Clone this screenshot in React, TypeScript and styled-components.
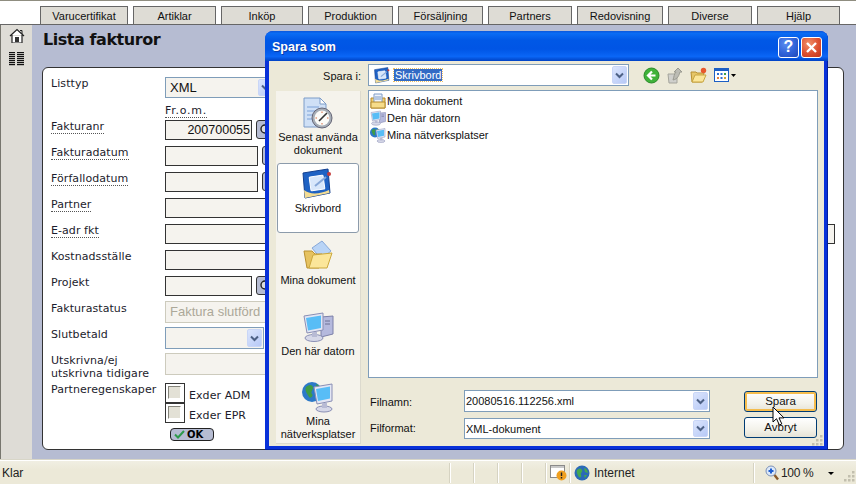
import React from "react";
import styled, { createGlobalStyle } from "styled-components";

const Global = createGlobalStyle`
  html, body { margin: 0; padding: 0; background: #fff; }
  * { box-sizing: border-box; }
`;

const UI = `"Liberation Sans", Arial, sans-serif`;
const WEB = `"DejaVu Sans", Verdana, sans-serif`;

const Page = styled.div`
  position: relative;
  width: 856px;
  height: 484px;
  overflow: hidden;
  display: flex;
  flex-direction: column;
  font-family: ${UI};
  color: #000;
`;
const TopBar = styled.div`
  height: 25px;
  flex: none;
  border-top: 1px solid #8f8d80;
  border-bottom: 1px solid #666;
  padding: 5px 0 0 40px;
  display: flex;
  gap: 5px;
  background: #fff;
`;
const Tab = styled.div<{ $w: number }>`
  width: ${(p) => p.$w}px;
  height: 18px;
  background: #dedcd5;
  border: 1px solid #666;
  border-bottom: none;
  font-size: 11px;
  line-height: 18px;
  text-align: center;
  color: #111;
`;
const Content = styled.div`
  flex: 1;
  display: flex;
  min-height: 0;
`;
const Sidebar = styled.div`
  width: 32px;
  flex: none;
  background: #dedcd6;
  border-left: 1px solid #77766e;
  display: flex;
  flex-direction: column;
  align-items: center;
  gap: 8px;
  padding: 3px 0 0 0;
`;
const Main = styled.div`
  flex: 1;
  background: #b6bcd2;
  padding: 0 12px 9px 10px;
  display: flex;
  flex-direction: column;
  min-width: 0;
`;
const Heading = styled.div`
  height: 42px;
  flex: none;
  font-family: ${WEB};
  font-weight: bold;
  font-size: 16px;
  letter-spacing: -0.45px;
  line-height: 29px;
  padding-left: 1px;
  color: #111;
`;
const Card = styled.div`
  flex: 1;
  background: #fff;
  border: 1px solid #333;
  border-radius: 6px;
  padding: 9px 8px 0;
  font-family: ${WEB};
  font-size: 11px;
  letter-spacing: 0.07px;
  color: #1c1c2c;
`;
const Row = styled.div<{ $h: number }>`
  height: ${(p) => p.$h}px;
  display: grid;
  grid-template-columns: 114px 1fr;
`;
const Label = styled.div<{ $dy?: number }>`
  line-height: 13px;
  padding-top: ${(p) => p.$dy ?? 0}px;
`;
const HelpLabel = styled.span`
  display: inline-block;
  line-height: 12px;
  border-bottom: 1px dotted #555;
`;
const FromLabel = styled(HelpLabel)`
  margin-top: 7px;
  letter-spacing: 0.75px;
`;
const Controls = styled.div`
  display: flex;
  gap: 4px;
  align-items: flex-start;
`;
const Input = styled.div<{ $w: number; $h?: number }>`
  width: ${(p) => p.$w}px;
  height: ${(p) => p.$h ?? 20}px;
  background: #f5f3ee;
  border: 1px solid #333;
  font-family: ${UI};
  font-size: 12.5px;
  letter-spacing: 0;
  line-height: 18px;
  text-align: right;
  padding-right: 1px;
  color: #111;
`;
const Disabled = styled.div<{ $w: number }>`
  width: ${(p) => p.$w}px;
  height: 22px;
  background: #f5f3ee;
  border: 1px solid #cdcbbd;
  font-family: ${UI};
  font-size: 13px;
  letter-spacing: 0;
  line-height: 20px;
  padding-left: 4px;
  color: #aca899;
`;
const WebSelect = styled.div<{ $w: number; $h: number }>`
  width: ${(p) => p.$w}px;
  height: ${(p) => p.$h}px;
  background: #f5f3ee;
  border: 1px solid #7f9db9;
  font-family: ${UI};
  font-size: 13px;
  letter-spacing: 0;
  line-height: ${(p) => p.$h - 2}px;
  padding: 0 1px 0 4px;
  display: flex;
  align-items: stretch;
  justify-content: space-between;
  color: #111;
`;
const Arrow = styled.div`
  width: 15px;
  margin: 1px 0;
  background: linear-gradient(135deg, #dbe5fd, #b7c9f6);
  border: 1px solid #c9d6f7;
  border-radius: 2px;
  display: flex;
  align-items: center;
  justify-content: center;
`;
const PickButton = styled.div`
  width: 22px;
  height: 19px;
  flex: none;
  background: #b6bcd2;
  border: 1px solid #333;
  border-radius: 3px;
  display: flex;
  align-items: center;
  padding-left: 2px;
`;
const Checks = styled.div`
  display: flex;
  flex-direction: column;
`;
const CheckRow = styled.div`
  height: 20px;
  display: flex;
  align-items: center;
  gap: 4px;
`;
const CheckText = styled.span`
  padding-top: 4px;
`;
const CheckFrame = styled.div`
  width: 20px;
  height: 20px;
  border: 1px solid #333;
  padding: 2px;
`;
const CheckBox = styled.div`
  width: 13px;
  height: 13px;
  background: #e3e1d6;
  border-top: 1px solid #85847b;
  border-left: 1px solid #85847b;
  border-right: 1px solid #fff;
  border-bottom: 1px solid #fff;
`;
const OkButton = styled.div`
  width: 44px;
  height: 13px;
  margin: 5px 0 0 119px;
  background: #b6bcd2;
  border: 1px solid #222;
  border-radius: 4px;
  display: flex;
  align-items: center;
  gap: 2px;
  padding-left: 3px;
  font-weight: bold;
  font-size: 10px;
  color: #000;
`;

const StatusBar = styled.div`
  height: 25px;
  flex: none;
  border-top: 1px solid #d8d6c8;
  box-shadow: inset 0 1px 0 #fff;
  background: linear-gradient(#f1efe4, #ece9d8 40%, #ece9d8);
  display: flex;
  align-items: stretch;
  font-size: 12px;
  padding-top: 2px;
`;
const Cell = styled.div<{ $w?: number }>`
  ${(p) => (p.$w ? `width: ${p.$w}px; flex: none;` : "flex: 1;")}
  border-left: 1px solid #d6d3c2;
  box-shadow: inset 1px 0 0 #fff;
  margin: 1px 0;
  display: flex;
  align-items: center;
  gap: 4px;
  padding-left: 4px;
  color: #222;
  min-width: 0;
`;
const ReadyCell = styled(Cell)`
  border-left: none;
  box-shadow: none;
  padding-left: 2px;
`;
const ZoomCell = styled(Cell)`
  padding-left: 11px;
  gap: 2px;
`;
const ZoomValue = styled.span`
  letter-spacing: -0.35px;
`;
const ZoomCaret = styled.div`
  width: 0;
  height: 0;
  margin-left: 13px;
  border-left: 3px solid transparent;
  border-right: 3px solid transparent;
  border-top: 3px solid #000;
`;
const StatusGrip = styled.div`
  margin-left: auto;
  align-self: flex-end;
  line-height: 0;
`;

const Dialog = styled.div`
  position: absolute;
  left: 265px;
  top: 31px;
  width: 563px;
  height: 419px;
  background: #0831d9;
  border-radius: 8px 8px 0 0;
  padding: 0 4px 4px;
  display: flex;
  flex-direction: column;
  font-size: 11px;
  box-shadow: inset -1px -1px 0 #001ea0;
`;
const TitleBar = styled.div`
  height: 30px;
  flex: none;
  margin: 0 -4px;
  padding: 2px 6px 0 7px;
  border-radius: 8px 8px 0 0;
  background: linear-gradient(#0a57dc 0%, #0a6cf4 8%, #0058e6 30%, #0055e5 60%, #0a66f6 85%, #0042c4 100%);
  display: flex;
  align-items: center;
  justify-content: space-between;
`;
const TitleText = styled.div`
  color: #fff;
  font-family: "Liberation Sans", Arial, sans-serif;
  font-weight: bold;
  font-size: 12.5px;
  text-shadow: 1px 1px 0 #0a3ca8;
`;
const TitleButtons = styled.div`
  display: flex;
  gap: 2px;
`;
const TitleButton = styled.div<{ $close?: boolean }>`
  width: 21px;
  height: 21px;
  border: 1px solid #fff;
  border-radius: 3px;
  background: ${(p) =>
    p.$close
      ? "radial-gradient(circle at 35% 30%, #f0906a, #dd5030 55%, #c0351a)"
      : "radial-gradient(circle at 35% 30%, #5a8cf0, #2f62d8 55%, #1f48b8)"};
  display: flex;
  align-items: center;
  justify-content: center;
`;
const HelpMark = styled.span`
  color: #fff;
  font-weight: bold;
  font-size: 16px;
  line-height: 1;
`;
const DialogBody = styled.div`
  flex: 1;
  background: #ece9d8;
  padding: 3px 6px 3px 7px;
  display: grid;
  grid-template-columns: 85px 1fr;
  grid-template-rows: 23px 1fr;
  column-gap: 7px;
  row-gap: 3px;
  min-height: 0;
`;
const SaveInLabel = styled.div`
  text-align: right;
  line-height: 24px;
  color: #111;
`;
const TopRow = styled.div`
  display: flex;
  align-items: flex-start;
`;
const Combo = styled.div<{ $w: number; $h: number; $pl?: number }>`
  width: ${(p) => p.$w}px;
  height: ${(p) => p.$h}px;
  flex: none;
  background: #fff;
  border: 1px solid #7f9db9;
  display: flex;
  align-items: center;
  padding: 1px 1px 1px ${(p) => p.$pl ?? 1}px;
  gap: 3px;
  color: #111;
`;
const ComboText = styled.span`
  flex: 1;
`;
const Selected = styled.span`
  background: #316ac5;
  color: #fff;
  outline: 1px dotted #f0c060;
  padding: 0 1px;
  line-height: 13px;
`;
const ComboArrow = styled(Arrow)`
  width: 15px;
  align-self: stretch;
  margin: 0;
`;
const ToolIcons = styled.div`
  display: flex;
  align-items: center;
  height: 22px;
  margin-left: 14px;
  gap: 7px;
`;
const Places = styled.div`
  margin-top: 1px;
  background: #f5f3ec;
  border-right: 1px solid #dcdace;
  border-bottom: 1px solid #dcdace;
  display: flex;
  flex-direction: column;
  padding: 2px 1px 0;
`;
const Place = styled.div<{ $active?: boolean; $top: number }>`
  height: 70px;
  flex: none;
  display: flex;
  flex-direction: column;
  align-items: center;
  text-align: center;
  padding-top: ${(p) => p.$top}px;
  line-height: 13px;
  background: ${(p) => (p.$active ? "#fff" : "transparent")};
  border: ${(p) => (p.$active ? "1px solid #8c9bab" : "none")};
  border-radius: 3px;
  color: #111;
`;
const PlaceIcon = styled.div`
  height: 32px;
  flex: none;
  display: flex;
  align-items: flex-start;
  justify-content: center;
  margin-bottom: 2px;
`;
const RightPane = styled.div`
  display: flex;
  flex-direction: column;
  min-height: 0;
`;
const FileList = styled.div`
  height: 288px;
  flex: none;
  background: #fff;
  border: 1px solid #7f9db9;
  padding: 1px 1px;
`;
const FileRow = styled.div`
  height: 17px;
  display: flex;
  align-items: center;
  gap: 1px;
  color: #111;
`;
const Footer = styled.div`
  display: grid;
  grid-template-columns: 96px 246px 34px 73px;
  grid-template-rows: 22px 22px;
  row-gap: 6px;
  margin-top: 12px;
`;
const FieldLabel = styled.div<{ $lh: number }>`
  padding-left: 2px;
  line-height: ${(p) => p.$lh}px;
  color: #111;
`;
const FieldGap = styled.div``;
const ActionButton = styled.div<{ $default?: boolean; $dy: number }>`
  height: 21px;
  margin-top: ${(p) => p.$dy}px;
  border: 1px solid #003c74;
  border-radius: 3px;
  background: linear-gradient(#fff, #f3f2ea 60%, #e6e3d6);
  box-shadow: ${(p) => (p.$default ? "inset 0 0 0 2px #f5bd4e" : "none")};
  text-align: center;
  line-height: 19px;
  font-size: 11.5px;
  color: #111;
`;
const CursorLayer = styled.div`
  position: absolute;
  left: 772px;
  top: 406px;
  width: 14px;
  height: 20px;
`;
const DialogGrip = styled.div`
  position: absolute;
  left: 812px;
  top: 433px;
  width: 12px;
  height: 12px;
`;

const Chevron = () => (
  <svg width="9" height="7" viewBox="0 0 9 7">
    <path d="M1 1.5 4.5 5 8 1.5" fill="none" stroke="#4d6185" strokeWidth="2" />
  </svg>
);

const Home = () => (
  <svg width="16" height="16" viewBox="0 0 16 16">
    <path d="M1 8 8 1.5 15 8M3 7v7.5h10V7" fill="#fff" stroke="#222" strokeWidth="1.2" />
    <path d="M11 2.5h2V6" fill="none" stroke="#222" />
    <rect x="6" y="9" width="4" height="5.5" fill="#333" />
    <path d="M3.5 14.5h9" stroke="#888" />
  </svg>
);
const ColumnsIcon = () => (
  <svg width="15" height="15" viewBox="0 0 15 15">
    {[0, 2, 4, 6, 8, 10, 12].map((y) => (
      <g key={y}>
        <rect x="0" y={y} width="6" height="1.2" fill="#111" />
        <rect x="8" y={y} width="7" height="1.2" fill="#111" />
      </g>
    ))}
  </svg>
);
const Magnifier = () => (
  <svg width="14" height="14" viewBox="0 0 14 14">
    <circle cx="6" cy="6" r="4" fill="#ddd" stroke="#222" strokeWidth="1.4" />
    <path d="M9 9 13 13" stroke="#222" strokeWidth="2" />
  </svg>
);
const Tick = () => (
  <svg width="11" height="9" viewBox="0 0 11 9">
    <path d="M1 4.5 4 7.5 10 1" fill="none" stroke="#2d9a4a" strokeWidth="2" />
  </svg>
);

const RecentIcon = () => (
  <svg width="32" height="32" viewBox="0 0 32 32">
    <path d="M2 1h16l6 6v23H2z" fill="#cfe0f6" stroke="#7d9cc8" />
    <path d="M18 1v6h6z" fill="#fff" stroke="#7d9cc8" />
    <path d="M5 10h12M5 14h9M5 18h8M5 22h8" stroke="#7da2d8" />
    <circle cx="20" cy="21" r="10" fill="#a6adb6" stroke="#667" />
    <circle cx="20" cy="21" r="7.5" fill="#fbfbf8" />
    <path d="M20 21 25 16M20 21 17 24" stroke="#333" strokeWidth="1.6" />
    <path d="M20 14.5v1.5M20 26v1.5M13.5 21H15M25 21h1.5" stroke="#d86a40" />
  </svg>
);
const DesktopIcon = ({ size = 32 }: { size?: number }) => (
  <svg width={size} height={size} viewBox="0 0 32 32">
    <path d="M1 5 26 1l2 24-25 5z" fill="#1f62c4" stroke="#123f90" />
    <path d="M2 22c6 5 16 4 25 0l.5 3L3 30z" fill="#f3dc93" />
    <rect x="8" y="8" width="14" height="14" rx="1" fill="#d8e7fb" stroke="#fff" transform="rotate(-8 15 15)" />
    <path d="M13 18 24 9" stroke="#88a8d8" strokeWidth="2" />
    <circle cx="27" cy="6" r="2" fill="#c43c3c" />
  </svg>
);
const DocsFolderIcon = () => (
  <svg width="32" height="32" viewBox="0 0 32 32">
    <path d="M10 8 20 1l9 10-10 8z" fill="#b9d4f6" stroke="#88a8d8" />
    <path d="M2 11h8l3 3h7l-3 14H5z" fill="#e6c260" stroke="#b89030" />
    <path d="M7 28 11 15l19-2-5 15z" fill="#fbe69a" stroke="#cba83c" />
  </svg>
);
const ComputerIcon = ({ size = 32 }: { size?: number }) => (
  <svg width={size} height={size} viewBox="0 0 32 32">
    <path d="M19 6 31 5v18l-12 3z" fill="#b5b9dd" stroke="#7c80a8" />
    <path d="M23 10h5M23 13h5" stroke="#6d7194" />
    <path d="M2 5 21 2v17L5 22z" fill="#e3e6f4" stroke="#8a8fb5" />
    <path d="M4 7 19 4.5v12.5L6 19.5z" fill="#58bdf6" />
    <ellipse cx="12" cy="27" rx="9" ry="3.5" fill="#d6d8e8" stroke="#8a8fb5" />
    <path d="M10 21h5v5h-5z" fill="#b8bbd4" />
  </svg>
);
const NetIcon = ({ size = 32 }: { size?: number }) => (
  <svg width={size} height={size} viewBox="0 0 32 32">
    <circle cx="10" cy="11" r="10" fill="#2c79c8" />
    <path d="M4 6c4-3 6-2 7 0s-3 5-1 7-2 5-3 3-5-7-3-10zM14 3c3 1 5 4 5 7l-4-1z" fill="#3f9c46" />
    <path d="M12 6 30 3v17l-15 3z" fill="#e3e6f4" stroke="#8a8fb5" />
    <path d="M14 8 28 5.5v12L16 20z" fill="#58bdf6" />
    <ellipse cx="22" cy="28" rx="8" ry="3" fill="#d6d8e8" stroke="#8a8fb5" />
    <path d="M20 22h5v5h-5z" fill="#b8bbd4" />
  </svg>
);
const DocsSmall = () => (
  <svg width="16" height="16" viewBox="0 0 16 16">
    <path d="M1 5h14v10H1z" fill="#f0cf72" stroke="#b58a2c" />
    <path d="M4 1h8v9H4z" fill="#eef3fb" stroke="#7d9cc8" />
    <path d="M5 4h6M5 6h6" stroke="#7d9cc8" />
    <path d="M1 9h14v6H1z" fill="#f6dc8a" stroke="#b58a2c" />
  </svg>
);
const BackIcon = () => (
  <svg width="17" height="17" viewBox="0 0 17 17">
    <circle cx="8.5" cy="8.5" r="7.5" fill="#3fb23a" stroke="#2a8a2a" />
    <path d="M12.5 8.5h-6M9 4.5l-4 4 4 4" fill="none" stroke="#fff" strokeWidth="2.2" />
  </svg>
);
const UpIcon = () => (
  <svg width="16" height="17" viewBox="0 0 16 17">
    <path d="M1 7h9v9H2z" fill="#d0d0cc" stroke="#a5a59c" />
    <path d="M6 13c1-3 1-6 3-8H7l4-4 4 4h-2c-1 3-2 7-7 8z" fill="#bcbcb4" stroke="#9a9a90" />
  </svg>
);
const NewFolderIcon = () => (
  <svg width="17" height="16" viewBox="0 0 17 16">
    <path d="M1 5h5l1 1h7l-2 9H2z" fill="#e6c668" stroke="#b89030" />
    <path d="M2 15 5 8h11l-3 7z" fill="#fbe69a" stroke="#c8a540" />
    <circle cx="13.5" cy="3.5" r="2.7" fill="#e8582c" />
  </svg>
);
const ViewsIcon = () => (
  <svg width="22" height="14" viewBox="0 0 22 14">
    <rect x="0.5" y="0.5" width="14" height="13" fill="#fff" stroke="#1c5fc4" />
    <rect x="0.5" y="0.5" width="14" height="2.5" fill="#1c5fc4" />
    <path d="M3 5h2v2H3z" fill="#2f6fd0" />
    <path d="M6.5 5h2v2h-2z" fill="#2f6fd0" />
    <path d="M10 5h2v2h-2z" fill="#3da048" />
    <path d="M3 9h2v2H3z" fill="#e0803c" />
    <path d="M6.5 9h2v2h-2z" fill="#2f6fd0" />
    <path d="M10 9h2v2h-2z" fill="#d8a030" />
    <path d="M17 6h5l-2.5 3z" fill="#000" />
  </svg>
);
const PageWarn = () => (
  <svg width="17" height="16" viewBox="0 0 17 16">
    <rect x="0.5" y="0.5" width="14" height="12" fill="#fff" stroke="#8a8a8a" />
    <path d="M1 1h13v2H1z" fill="#c8c8c8" />
    <circle cx="11.5" cy="10.5" r="5" fill="#f0a020" />
    <path d="M11.5 7.5v3.5M11.5 12v1.5" stroke="#222" strokeWidth="1.4" />
  </svg>
);
const Globe = () => (
  <svg width="16" height="16" viewBox="0 0 16 16">
    <circle cx="8" cy="8" r="7.5" fill="#2b6ab8" />
    <path d="M3 5c2-2 4-2 5 0s-2 3-1 5-1 3-2 2-3-5-2-7zM10 3c2 0 4 3 4 5l-3-1zM10 10l3 0-2 3z" fill="#45a850" />
  </svg>
);
const ZoomGlass = () => (
  <svg width="14" height="16" viewBox="0 0 14 16">
    <circle cx="6" cy="6" r="5" fill="#dce8f8" stroke="#7c92b8" />
    <path d="M6 3.5v5M3.5 6h5" stroke="#1f5fd0" strokeWidth="2" />
    <path d="M9.5 10 13 14.5" stroke="#8a5a2a" strokeWidth="2.4" />
  </svg>
);
const Grip = () => (
  <svg width="12" height="12" viewBox="0 0 12 12">
    {[
      [8, 0], [4, 4], [8, 4], [0, 8], [4, 8], [8, 8],
    ].map(([x, y]) => (
      <rect key={`${x}-${y}`} x={x} y={y} width="2.5" height="2.5" fill="#c2bfae" />
    ))}
  </svg>
);
const Pointer = () => (
  <svg width="14" height="20" viewBox="0 0 14 20">
    <path d="M1 1v15l3.5-3.3L7.4 19l2.4-1.1-2.8-6h5z" fill="#fff" stroke="#000" />
  </svg>
);

const tabs: [string, number][] = [
  ["Varucertifikat", 88], ["Artiklar", 83], ["Inköp", 82], ["Produktion", 85], ["Försäljning", 85],
  ["Partners", 84], ["Redovisning", 86], ["Diverse", 84], ["Hjälp", 83],
];

export default function App() {
  return (
    <Page>
      <Global />
      <TopBar>
        {tabs.map(([t, w]) => (
          <Tab key={t} $w={w}>{t}</Tab>
        ))}
      </TopBar>
      <Content>
        <Sidebar>
          <Home />
          <ColumnsIcon />
        </Sidebar>
        <Main>
          <Heading>Lista fakturor</Heading>
          <Card>
            <Row $h={21}>
              <Label>Listtyp</Label>
              <Controls>
                <WebSelect $w={110} $h={21}>XML<Arrow><Chevron /></Arrow></WebSelect>
              </Controls>
            </Row>
            <Row $h={22}>
              <span />
              <Label><FromLabel>Fr.o.m.</FromLabel></Label>
            </Row>
            <Row $h={26}>
              <Label><HelpLabel>Fakturanr</HelpLabel></Label>
              <Controls><Input $w={87}>200700055</Input><PickButton><Magnifier /></PickButton></Controls>
            </Row>
            <Row $h={26}>
              <Label><HelpLabel>Fakturadatum</HelpLabel></Label>
              <Controls><Input $w={93} /><PickButton /></Controls>
            </Row>
            <Row $h={26}>
              <Label><HelpLabel>Förfallodatum</HelpLabel></Label>
              <Controls><Input $w={93} /><PickButton /></Controls>
            </Row>
            <Row $h={26}>
              <Label><HelpLabel>Partner</HelpLabel></Label>
              <Controls><Input $w={240} /></Controls>
            </Row>
            <Row $h={26}>
              <Label><HelpLabel>E-adr fkt</HelpLabel></Label>
              <Controls><Input $w={670} /></Controls>
            </Row>
            <Row $h={26}>
              <Label>Kostnadsställe</Label>
              <Controls><Input $w={240} /></Controls>
            </Row>
            <Row $h={25}>
              <Label>Projekt</Label>
              <Controls><Input $w={87} /><PickButton><Magnifier /></PickButton></Controls>
            </Row>
            <Row $h={26}>
              <Label $dy={1}>Fakturastatus</Label>
              <Controls><Disabled $w={130}>Faktura slutförd</Disabled></Controls>
            </Row>
            <Row $h={26}>
              <Label $dy={1}>Slutbetald</Label>
              <Controls>
                <WebSelect $w={99} $h={22}><span /><Arrow><Chevron /></Arrow></WebSelect>
              </Controls>
            </Row>
            <Row $h={30}>
              <Label $dy={1}>Utskrivna/ej<br />utskrivna tidigare</Label>
              <Controls><Disabled $w={130} /></Controls>
            </Row>
            <Row $h={40}>
              <Label>Partneregenskaper</Label>
              <Checks>
                <CheckRow><CheckFrame><CheckBox /></CheckFrame><CheckText>Exder ADM</CheckText></CheckRow>
                <CheckRow><CheckFrame><CheckBox /></CheckFrame><CheckText>Exder EPR</CheckText></CheckRow>
              </Checks>
            </Row>
            <OkButton><Tick />OK</OkButton>
          </Card>
        </Main>
      </Content>
      <StatusBar>
        <ReadyCell>Klar</ReadyCell>
        <Cell $w={24} /><Cell $w={24} /><Cell $w={24} /><Cell $w={24} />
        <Cell $w={24}><PageWarn /></Cell>
        <Cell $w={184}><Globe />Internet</Cell>
        <ZoomCell $w={103}>
          <ZoomGlass /><ZoomValue>100 %</ZoomValue><ZoomCaret />
          <StatusGrip><Grip /></StatusGrip>
        </ZoomCell>
      </StatusBar>

      <Dialog>
        <TitleBar>
          <TitleText>Spara som</TitleText>
          <TitleButtons>
            <TitleButton><HelpMark>?</HelpMark></TitleButton>
            <TitleButton $close>
              <svg width="13" height="13" viewBox="0 0 13 13">
                <path d="M2 2 11 11M11 2 2 11" stroke="#fff" strokeWidth="2.4" />
              </svg>
            </TitleButton>
          </TitleButtons>
        </TitleBar>
        <DialogBody>
          <SaveInLabel>Spara i:</SaveInLabel>
          <TopRow>
            <Combo $w={261} $h={22} $pl={5}>
              <DesktopIcon size={17} />
              <ComboText><Selected>Skrivbord</Selected></ComboText>
              <ComboArrow><Chevron /></ComboArrow>
            </Combo>
            <ToolIcons>
              <BackIcon />
              <UpIcon />
              <NewFolderIcon />
              <ViewsIcon />
            </ToolIcons>
          </TopRow>
          <Places>
            <Place $top={4}><PlaceIcon><RecentIcon /></PlaceIcon>Senast använda dokument</Place>
            <Place $active $top={4}><PlaceIcon><DesktopIcon /></PlaceIcon>Skrivbord</Place>
            <Place $top={7}><PlaceIcon><DocsFolderIcon /></PlaceIcon>Mina dokument</Place>
            <Place $top={8}><PlaceIcon><ComputerIcon /></PlaceIcon>Den här datorn</Place>
            <Place $top={8}><PlaceIcon><NetIcon /></PlaceIcon>Mina nätverksplatser</Place>
          </Places>
          <RightPane>
            <FileList>
              <FileRow><DocsSmall />Mina dokument</FileRow>
              <FileRow><ComputerIcon size={16} />Den här datorn</FileRow>
              <FileRow><NetIcon size={16} />Mina nätverksplatser</FileRow>
            </FileList>
            <Footer>
              <FieldLabel $lh={24}>Filnamn:</FieldLabel>
              <Combo $w={246} $h={22}>
                <ComboText>20080516.112256.xml</ComboText>
                <ComboArrow><Chevron /></ComboArrow>
              </Combo>
              <FieldGap />
              <ActionButton $default $dy={1}>Spara</ActionButton>
              <FieldLabel $lh={21}>Filformat:</FieldLabel>
              <Combo $w={246} $h={21}>
                <ComboText>XML-dokument</ComboText>
                <ComboArrow><Chevron /></ComboArrow>
              </Combo>
              <FieldGap />
              <ActionButton $dy={-1}>Avbryt</ActionButton>
            </Footer>
          </RightPane>
        </DialogBody>
      </Dialog>
      <DialogGrip><Grip /></DialogGrip>
      <CursorLayer><Pointer /></CursorLayer>
    </Page>
  );
}
